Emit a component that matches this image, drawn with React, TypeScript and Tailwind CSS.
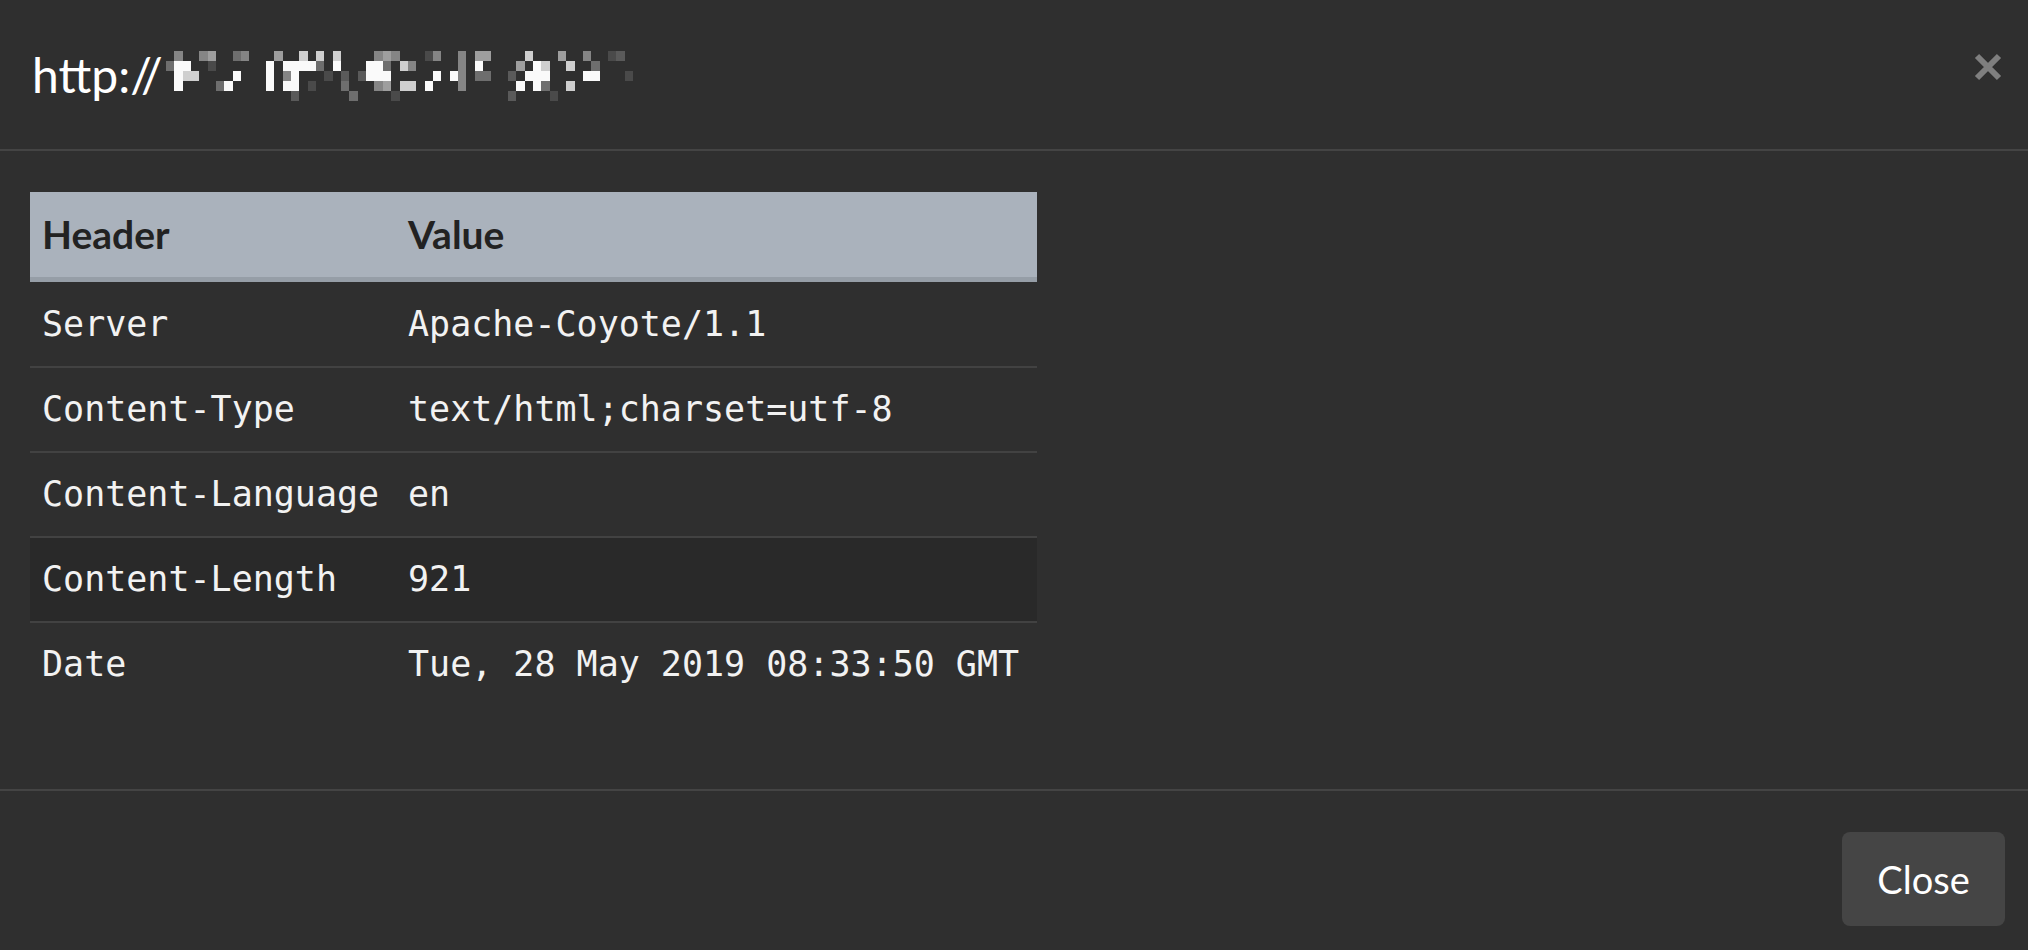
import React from "react";

// pixelated part of the url, one entry per column: row letter + grey level
const MOSAIC = [
  "B5", "A6B9C9D9", "B9C8", "C8", "A6", "A7B3", "D5", "D9", "A5C9", "A6",
  "", "", "B9C9D9", "A7", "B9C6D9", "B9C9D9E4", "A8B9", "B9D3", "A8B5", "C3",
  "A8B9", "C4D5", "E5", "C4", "B9C9", "A6B9C9D6", "A7B5C9D7", "A6E3", "B8D8", "B6D8",
  "", "A3D9", "A6C9", "", "C9", "A6B6C6D6", "", "A7B9C5", "A7C5", "",
  "", "C4E4", "B7D9", "A8C9", "B9C9D9", "B8C9D5", "E3", "A7", "B8D8", "",
  "A6C9", "B5C9", "", "A3", "A4", "C3",
];

const GREY: Record<string, string> = {
  "3": "#4a4a4a",
  "4": "#5a5a5a",
  "5": "#6e6e6e",
  "6": "#858585",
  "7": "#9e9e9e",
  "8": "#cfcfcf",
  "9": "#fafafa",
};

function Mosaic() {
  const cells: React.ReactElement[] = [];
  MOSAIC.forEach((col, c) => {
    for (let i = 0; i < col.length; i += 2) {
      const row = col.charCodeAt(i) - 65;
      cells.push(<rect key={`${c}-${i}`} x={c} y={row} width={1} height={1} fill={GREY[col[i + 1]]} />);
    }
  });
  return (
    <svg width={467} height={50} viewBox="0 0 56 5" preserveAspectRatio="none" shapeRendering="crispEdges" className="ml-[3px] mt-[2px]">
      {cells}
    </svg>
  );
}

const ROWS: [string, string][] = [
  ["Server", "Apache-Coyote/1.1"],
  ["Content-Type", "text/html;charset=utf-8"],
  ["Content-Language", "en"],
  ["Content-Length", "921"],
  ["Date", "Tue, 28 May 2019 08:33:50 GMT"],
];

export default function App() {
  return (
    <div className="w-[2028px] h-[950px] bg-[#2f2f2f] flex flex-col font-['Lato','Liberation_Sans',sans-serif]">
      {/* Header */}
      <div className="h-[151px] shrink-0 flex items-center justify-between pl-[32px] pr-[26px] border-b-2 border-[#444444]">
        <div className="flex items-center">
          <span className="text-[48px] leading-none text-white">http://</span>
          <Mosaic />
        </div>
        <button className="w-[28px] h-[28px] mb-[16px]">
          <svg width="28" height="28" viewBox="0 0 28 28">
            <path d="M3 3 L25 25 M25 3 L3 25" stroke="#7f7f7f" strokeWidth="6" />
          </svg>
        </button>
      </div>

      {/* Body */}
      <div className="flex-1 pl-[30px] pt-[41px]">
        <div className="w-[1007px]">
          <div className="flex items-center h-[90px] bg-[#aab2bc] border-b-[5px] border-[#969ea7] text-[39px] font-bold text-[#222222]">
            <div className="w-[366px] px-[12px]">Header</div>
            <div className="px-[12px]">Value</div>
          </div>
          {ROWS.map(([name, value], i) => (
            <div
              key={name}
              className={`flex items-center text-[35px] text-[#f2f2f2] font-['DejaVu_Sans_Mono','Liberation_Mono',monospace] ${
                i === 0 ? "h-[84px]" : "h-[85px] border-t-2 border-[#424242]"
              } ${name === "Content-Length" ? "bg-[#292929]" : ""}`}
            >
              <div className="w-[366px] px-[12px] whitespace-nowrap">{name}</div>
              <div className="px-[12px] whitespace-nowrap">{value}</div>
            </div>
          ))}
        </div>
      </div>

      {/* Footer */}
      <div className="h-[161px] shrink-0 border-t-2 border-[#444444] flex justify-end items-start pt-[41px] pr-[23px]">
        <button className="w-[163px] h-[94px] rounded-[8px] bg-[#454545] text-white text-[38px]">Close</button>
      </div>
    </div>
  );
}
